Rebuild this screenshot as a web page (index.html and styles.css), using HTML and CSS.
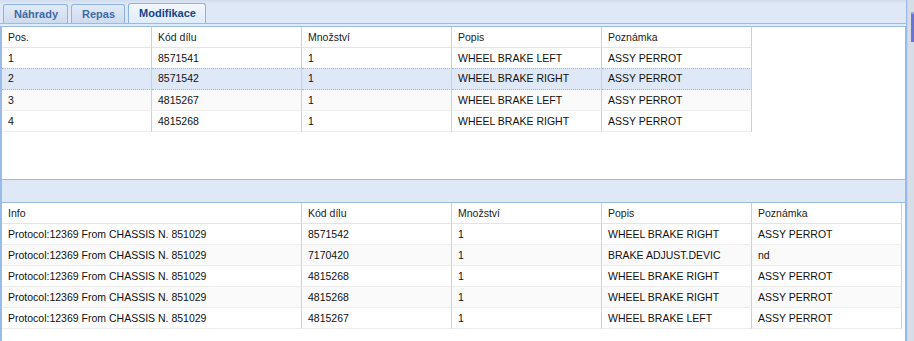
FILE: index.html
```html
<!DOCTYPE html>
<html lang="cs">
<head>
    <meta charset="UTF-8">
    <title>Modifikace</title>
    <link rel="stylesheet" href="styles.css">
</head>
<body>
    <div class="app">
        <div class="tabpanel">
            <div class="tabbar">
                <div class="tab">Náhrady</div>
                <div class="tab">Repas</div>
                <div class="tab active">Modifikace</div>
            </div>
            <div class="tabstrip"></div>
            <div class="tabbody">
                <div class="grid grid-top">
                    <div class="row head">
                        <div class="cell">Pos.</div>
                        <div class="cell">Kód dílu</div>
                        <div class="cell">Množství</div>
                        <div class="cell">Popis</div>
                        <div class="cell">Poznámka</div>
                    </div>
                    <div class="row">
                        <div class="cell">1</div>
                        <div class="cell">8571541</div>
                        <div class="cell">1</div>
                        <div class="cell">WHEEL BRAKE LEFT</div>
                        <div class="cell">ASSY PERROT</div>
                    </div>
                    <div class="row selected">
                        <div class="cell">2</div>
                        <div class="cell">8571542</div>
                        <div class="cell">1</div>
                        <div class="cell">WHEEL BRAKE RIGHT</div>
                        <div class="cell">ASSY PERROT</div>
                    </div>
                    <div class="row alt">
                        <div class="cell">3</div>
                        <div class="cell">4815267</div>
                        <div class="cell">1</div>
                        <div class="cell">WHEEL BRAKE LEFT</div>
                        <div class="cell">ASSY PERROT</div>
                    </div>
                    <div class="row">
                        <div class="cell">4</div>
                        <div class="cell">4815268</div>
                        <div class="cell">1</div>
                        <div class="cell">WHEEL BRAKE RIGHT</div>
                        <div class="cell">ASSY PERROT</div>
                    </div>
                </div>

                <div class="splitbar"></div>

                <div class="grid grid-bottom">
                    <div class="row head">
                        <div class="cell wide">Info</div>
                        <div class="cell">Kód dílu</div>
                        <div class="cell">Množství</div>
                        <div class="cell">Popis</div>
                        <div class="cell">Poznámka</div>
                    </div>
                    <div class="row">
                        <div class="cell wide">Protocol:12369 From CHASSIS N. 851029</div>
                        <div class="cell">8571542</div>
                        <div class="cell">1</div>
                        <div class="cell">WHEEL BRAKE RIGHT</div>
                        <div class="cell">ASSY PERROT</div>
                    </div>
                    <div class="row alt">
                        <div class="cell wide">Protocol:12369 From CHASSIS N. 851029</div>
                        <div class="cell">7170420</div>
                        <div class="cell">1</div>
                        <div class="cell">BRAKE ADJUST.DEVIC</div>
                        <div class="cell">nd</div>
                    </div>
                    <div class="row">
                        <div class="cell wide">Protocol:12369 From CHASSIS N. 851029</div>
                        <div class="cell">4815268</div>
                        <div class="cell">1</div>
                        <div class="cell">WHEEL BRAKE RIGHT</div>
                        <div class="cell">ASSY PERROT</div>
                    </div>
                    <div class="row alt">
                        <div class="cell wide">Protocol:12369 From CHASSIS N. 851029</div>
                        <div class="cell">4815268</div>
                        <div class="cell">1</div>
                        <div class="cell">WHEEL BRAKE RIGHT</div>
                        <div class="cell">ASSY PERROT</div>
                    </div>
                    <div class="row">
                        <div class="cell wide">Protocol:12369 From CHASSIS N. 851029</div>
                        <div class="cell">4815267</div>
                        <div class="cell">1</div>
                        <div class="cell">WHEEL BRAKE LEFT</div>
                        <div class="cell">ASSY PERROT</div>
                    </div>
                </div>
            </div>
        </div>
        <div class="side">
            <div class="side-bar"></div>
        </div>
    </div>
</body>
</html>
```

FILE: styles.css
```css
/* Global Styles */
body {
    margin: 0;
    padding: 0;
    font-family: 'Liberation Sans', Arial, sans-serif;
    font-size: 10.5px;
    color: #111;
    background: #fff;
}

.app {
    display: flex;
    width: 914px;
    height: 341px;
    overflow: hidden;
}

.tabpanel {
    width: 907px;
    display: flex;
    flex-direction: column;
}

/* Tabs */
.tabbar {
    height: 23px;
    box-sizing: border-box;
    padding: 3px 0 0 3px;
    display: flex;
    gap: 3px;
    align-items: flex-end;
    background: linear-gradient(#d0dcec 0, #dfe8f6 4px);
    border-right: 1px solid #99bbe8;
}

.tab {
    height: 19px;
    box-sizing: border-box;
    padding: 0 9px 0 10px;
    border: 1px solid #8db2e3;
    border-bottom: none;
    border-radius: 3px 3px 0 0;
    background: linear-gradient(#e2ebf7, #cddbef);
    color: #416aa3;
    font-size: 11px;
    font-weight: bold;
    line-height: 19px;
}

.tab.active {
    height: 20px;
    background: linear-gradient(#f3f7fd, #deecfd);
    color: #15428b;
}

.tabstrip {
    height: 4px;
    box-sizing: border-box;
    border-top: 1px solid #99bbe8;
    border-bottom: 1px solid #99bbe8;
    background: #deecfd;
    border-right: 1px solid #99bbe8;
}

.tabbody {
    flex: 1;
    display: flex;
    flex-direction: column;
    border-left: 2px solid #99bbe8;
    border-right: 2px solid #99bbe8;
}

/* Grids */
.grid {
    background: #fff;
}

.grid-top {
    height: 152px;
}

.grid-bottom {
    flex: 1;
}

.splitbar {
    height: 24px;
    box-sizing: border-box;
    background: #dfe8f6;
    border-top: 1px solid #99bbe8;
    border-bottom: 1px solid #99bbe8;
}

.row {
    display: flex;
    height: 21px;
}

.cell {
    width: 150px;
    flex: none;
    box-sizing: border-box;
    padding: 1px 6px 0;
    line-height: 19px;
    border-right: 1px solid #d0d0d0;
    border-bottom: 1px solid #ededed;
    white-space: nowrap;
    overflow: hidden;
}

.cell.wide {
    width: 300px;
}

.row.head .cell {
    color: #222;
    border-bottom-color: #e4e4e4;
}

.row.alt .cell {
    background: #fafafa;
}

.row.selected .cell {
    background: #dfe8f6;
    border-top: 1px dotted #a3bae9;
    border-bottom: 1px dotted #a3bae9;
    line-height: 19px;
    padding-top: 0;
    margin-top: -1px;
    height: 22px;
}

/* Right edge */
.side {
    flex: 1;
    background: #d6dde6;
    border-left: 1px solid #c4d3e8;
    display: flex;
    justify-content: flex-end;
}

.side-bar {
    width: 3px;
    margin-top: 12px;
    height: 28px;
    background: #6b72d8;
    border-top: 2px solid #9aa8e0;
}
```
